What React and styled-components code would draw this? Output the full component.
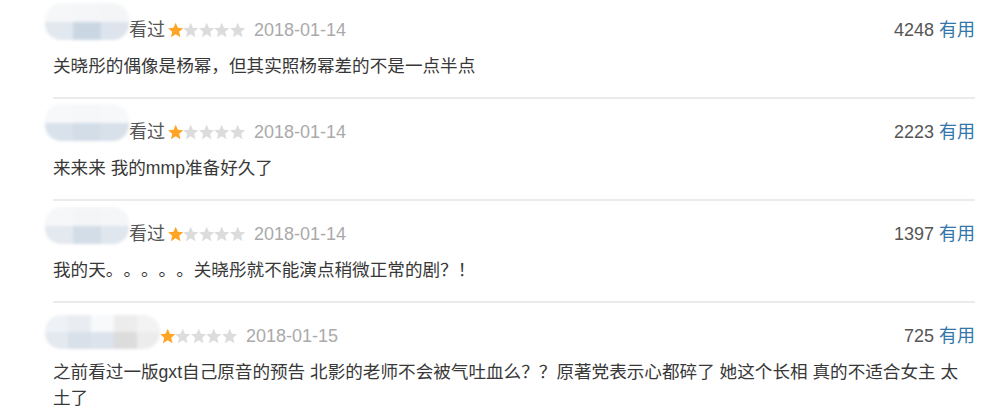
import styled, { createGlobalStyle } from "styled-components";

const GlobalStyle = createGlobalStyle`
  body {
    margin: 0;
    background: #fff;
    font-family: "Liberation Sans", "Noto Sans CJK SC", sans-serif;
    text-spacing-trim: space-all;
  }
`;

const List = styled.div`
  width: 1000px;
  padding: 0 25px 0 53px;
  box-sizing: border-box;
`;

const Item = styled.div`
  padding: 20px 0 18px;
  border-bottom: 2px solid #ebebeb;

  &:first-child {
    padding-top: 17px;
  }
  &:last-child {
    border-bottom: none;
  }
`;

const Header = styled.div`
  display: flex;
  align-items: center;
  height: 26px;
  font-size: 18px;
  line-height: 26px;
`;

const Mosaic = styled.div`
  align-self: flex-start;
  display: grid;
  grid-template-columns: repeat(${(p) => p.cols}, 1fr);
  width: ${(p) => p.w}px;
  height: ${(p) => p.h}px;
  margin: ${(p) => p.top}px 0 0 -8px;
  border-radius: 16px;
  overflow: hidden;
  filter: blur(1.5px);
`;

const Cell = styled.div`
  background: ${(p) => p.c};
`;

const Watched = styled.span`
  color: #555;
  margin-right: 3px;
`;

const Stars = styled.span`
  display: inline-flex;
  margin-right: 9px;
`;

const Date = styled.span`
  color: #aaa;
`;

const Votes = styled.span`
  margin-left: auto;
  color: #555;
`;

const Useful = styled.span`
  color: #3377aa;
  margin-left: 5px;
`;

const Comment = styled.p`
  margin: 10px 0 0;
  font-size: 17.6px;
  line-height: 26px;
  color: #383838;
`;

const Star = ({ on }) => (
  <svg width="15.4" height="16" viewBox="1 1 22 22">
    <path
      d="M12 1.5l3.1 7.2 7.8.7-5.9 5.2 1.8 7.7L12 18.2l-6.8 4.1 1.8-7.7-5.9-5.2 7.8-.7z"
      fill={on ? "#ffa424" : "#dcdcdc"}
    />
  </svg>
);

const reviews = [
  {
    watched: true,
    date: "2018-01-14",
    votes: 4248,
    text: "关晓彤的偶像是杨幂，但其实照杨幂差的不是一点半点",
    mosaic: { cols: 3, w: 84, h: 37, top: -14, cells: ["#f6f7f9", "#f4f6f8", "#f3f5f7", "#e2e8ef", "#cad7e3", "#dde4ed"] },
  },
  {
    watched: true,
    date: "2018-01-14",
    votes: 2223,
    text: "来来来 我的mmp准备好久了",
    mosaic: { cols: 3, w: 84, h: 37, top: -15, cells: ["#f7f8fa", "#f5f7f9", "#f7f8fa", "#d9e2eb", "#d2dde8", "#d8e1ea"] },
  },
  {
    watched: true,
    date: "2018-01-14",
    votes: 1397,
    text: "我的天。。。。。关晓彤就不能演点稍微正常的剧？！",
    mosaic: { cols: 3, w: 84, h: 37, top: -14, cells: ["#f6f7f9", "#f3f5f7", "#f4f6f8", "#e4e9ef", "#d3dde7", "#e0e6ee"] },
  },
  {
    watched: false,
    date: "2018-01-15",
    votes: 725,
    text: "之前看过一版gxt自己原音的预告 北影的老师不会被气吐血么？？原著党表示心都碎了 她这个长相 真的不适合女主 太土了",
    mosaic: {
      cols: 5,
      w: 115,
      h: 34,
      top: -8,
      cells: ["#eef1f5", "#e9edf2", "#f8f9fb", "#ececec", "#f3f3f3", "#e4e9ef", "#d8e0ea", "#dce3ec", "#dcdcdc", "#ececec"],
    },
  },
];

const App = () => (
  <>
    <GlobalStyle />
    <List>
      {reviews.map((r, i) => (
        <Item key={i}>
          <Header>
            <Mosaic cols={r.mosaic.cols} w={r.mosaic.w} h={r.mosaic.h} top={r.mosaic.top}>
              {r.mosaic.cells.map((c, j) => (
                <Cell key={j} c={c} />
              ))}
            </Mosaic>
            {r.watched && <Watched>看过</Watched>}
            <Stars>
              {[0, 1, 2, 3, 4].map((s) => (
                <Star key={s} on={s === 0} />
              ))}
            </Stars>
            <Date>{r.date}</Date>
            <Votes>
              {r.votes}
              <Useful>有用</Useful>
            </Votes>
          </Header>
          <Comment>{r.text}</Comment>
        </Item>
      ))}
    </List>
  </>
);

export default App;
